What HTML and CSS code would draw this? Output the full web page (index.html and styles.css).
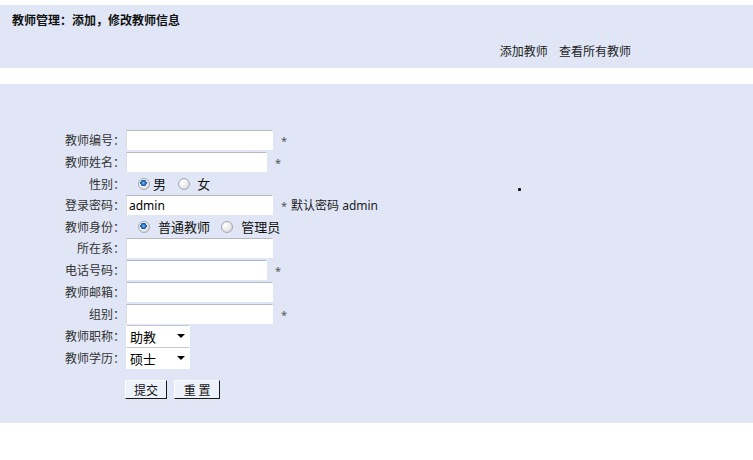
FILE: index.html
```html
<!DOCTYPE html>
<html lang="zh-CN">
<head>
    <meta charset="UTF-8">
    <title>教师管理</title>
    <link rel="stylesheet" href="styles.css">
</head>
<body>
    <div class="head">
        <div class="title">教师管理：添加，修改教师信息</div>
        <div class="links">
            <a href="#">添加教师</a>
            <a href="#">查看所有教师</a>
        </div>
    </div>
    <div class="main">
        <table class="form">
            <tr>
                <td class="label">教师编号：</td>
                <td><input type="text" class="wide"><span class="star">*</span></td>
            </tr>
            <tr>
                <td class="label">教师姓名：</td>
                <td><input type="text" class="narrow"><span class="star">*</span></td>
            </tr>
            <tr class="radio-row">
                <td class="label">性别：</td>
                <td>
                    <input type="radio" name="sex" class="r1" checked><span class="t1">男</span>
                    <input type="radio" name="sex" class="r2"><span class="t2">女</span>
                </td>
            </tr>
            <tr>
                <td class="label">登录密码：</td>
                <td><input type="text" class="wide" value="admin"><span class="star">*</span><span class="note">默认密码 admin</span></td>
            </tr>
            <tr class="radio-row">
                <td class="label">教师身份：</td>
                <td>
                    <input type="radio" name="role" class="r1" checked><span class="t3">普通教师</span>
                    <input type="radio" name="role" class="r3"><span class="t4">管理员</span>
                </td>
            </tr>
            <tr>
                <td class="label">所在系：</td>
                <td><input type="text" class="wide"></td>
            </tr>
            <tr>
                <td class="label">电话号码：</td>
                <td><input type="text" class="narrow"><span class="star">*</span></td>
            </tr>
            <tr>
                <td class="label">教师邮箱：</td>
                <td><input type="text" class="wide"></td>
            </tr>
            <tr>
                <td class="label">组别：</td>
                <td><input type="text" class="wide"><span class="star">*</span></td>
            </tr>
            <tr class="select-row">
                <td class="label">教师职称：</td>
                <td>
                    <span class="select-box">
                        <select>
                            <option>助教</option>
                            <option>讲师</option>
                            <option>副教授</option>
                            <option>教授</option>
                        </select>
                    </span>
                </td>
            </tr>
            <tr class="select-row">
                <td class="label">教师学历：</td>
                <td>
                    <span class="select-box">
                        <select>
                            <option>硕士</option>
                            <option>本科</option>
                            <option>博士</option>
                        </select>
                    </span>
                </td>
            </tr>
        </table>
        <div class="actions">
            <button type="submit" class="btn-submit">提交</button>
            <button type="reset" class="btn-reset">重 置</button>
        </div>
        <span class="dot"></span>
    </div>
</body>
</html>
```

FILE: styles.css
```css
body {
    margin: 0;
    font-family: "Noto Sans", "Noto Sans CJK SC", sans-serif;
    font-size: 12px;
    color: #333;
    background-color: #fff;
}
.head {
    margin-top: 5px;
    height: 63px;
    background-color: #e0e6f5;
}
.title {
    padding: 8px 0 0 12px;
    line-height: 16px;
    font-weight: bold;
    color: #111;
}
.links {
    margin-top: 15px;
    padding-right: 122px;
    line-height: 16px;
    text-align: right;
}
.links a {
    color: #222;
    text-decoration: none;
    margin-left: 8px;
}
.main {
    position: relative;
    margin-top: 16px;
    height: 294px;
    padding-top: 45px;
    background-color: #e0e6f5;
}
.form {
    border-collapse: collapse;
    margin-left: 50px;
}
.form td {
    padding: 1px 0;
    height: 20px;
    vertical-align: middle;
    white-space: nowrap;
}
.form td.label {
    width: 75px;
    padding-right: 0;
    text-align: right;
}
.form td + td {
    padding-left: 1px;
}
.form .radio-row td {
    height: 21px;
    padding: 0;
}
.form .select-row td {
    height: 22px;
    padding: 0;
}
.form .radio-row td + td,
.form .select-row td + td {
    padding-left: 1px;
}
input[type="text"] {
    box-sizing: border-box;
    height: 20px;
    margin: 0;
    padding: 0 2px;
    border: 1px solid #fff;
    border-top-color: #b4b8c2;
    border-left-color: #d8dce4;
    background-color: #fff;
    font-family: "Noto Sans", "Noto Sans CJK SC", sans-serif;
    font-size: 12px;
    color: #000;
    vertical-align: middle;
}
input.wide {
    width: 147px;
}
input.narrow {
    width: 141px;
}
.star {
    margin-left: 8px;
    color: #555;
    font-size: 11px;
    vertical-align: middle;
}
.note {
    margin-left: 4px;
    color: #222;
    vertical-align: middle;
}
input[type="radio"] {
    -webkit-appearance: none;
    appearance: none;
    box-sizing: border-box;
    width: 12px;
    height: 12px;
    margin: 0;
    border: 1px solid #a4a8b0;
    border-radius: 50%;
    background: radial-gradient(circle at 35% 35%, #fff 0, #ececee 50%, #c8c9ce 100%);
    vertical-align: middle;
}
input[type="radio"]:checked {
    background:
        radial-gradient(circle at 45% 40%, #8cc4f0 0, #2a74c0 1.8px, #174f96 3px, transparent 3.4px),
        radial-gradient(circle at 35% 35%, #fff 0, #ececee 50%, #c8c9ce 100%);
}
.r1 {
    margin-left: 12px !important;
}
.r2 {
    margin-left: 9px !important;
}
.r3 {
    margin-left: 8px !important;
}
.t1, .t2, .t3, .t4 {
    font-size: 13px;
    color: #111;
    vertical-align: middle;
}
.t1 {
    margin-left: 3px;
}
.t2 {
    margin-left: 7px;
}
.t3 {
    margin-left: 8px;
}
.t4 {
    margin-left: 8px;
}
.select-box {
    position: relative;
    display: inline-block;
    vertical-align: middle;
}
.select-box select {
    -webkit-appearance: none;
    appearance: none;
    box-sizing: border-box;
    display: block;
    width: 64px;
    height: 22px;
    margin: 0;
    padding: 0 0 0 3px;
    border: 1px solid #fff;
    border-top-color: #c4c8d0;
    background-color: #fff;
    font-family: "Noto Sans CJK SC", sans-serif;
    font-size: 13px;
    color: #000;
}
.select-box::after {
    content: "";
    position: absolute;
    right: 5px;
    top: 9px;
    border-left: 4px solid transparent;
    border-right: 4px solid transparent;
    border-top: 4px solid #000;
    pointer-events: none;
}
.actions {
    margin: 11px 0 0 125px;
}
.actions button {
    box-sizing: border-box;
    height: 19px;
    margin: 0;
    padding: 0;
    border: 1px solid;
    border-color: #fafcff #1a1a1a #1a1a1a #fafcff;
    background-color: #edf2fa;
    font-family: "Noto Sans CJK SC", sans-serif;
    font-size: 12px;
    line-height: 16px;
    color: #111;
    vertical-align: top;
}
.btn-submit {
    width: 42px;
}
.btn-reset {
    width: 46px;
    margin-left: 4px !important;
}
.dot {
    position: absolute;
    left: 518px;
    top: 104px;
    width: 3px;
    height: 3px;
    border-radius: 1px;
    background-color: #111;
}
```
